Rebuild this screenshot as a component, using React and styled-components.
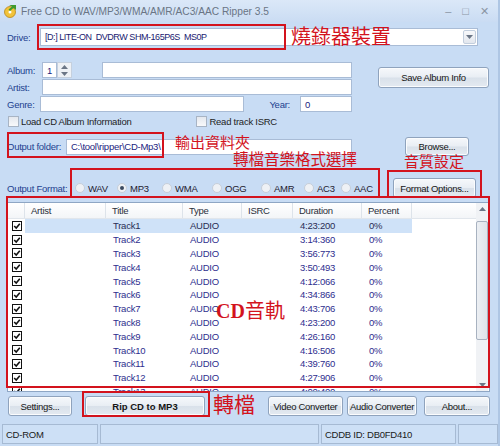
import React from "react";
import styled, { createGlobalStyle, css } from "styled-components";

const Global = createGlobalStyle`
  html, body { margin: 0; padding: 0; width: 500px; height: 446px; overflow: hidden; }
  body { font-family: "Liberation Sans", Arial, sans-serif; }
`;

const Window = styled.div`
  position: relative;
  width: 500px;
  height: 446px;
  box-sizing: border-box;
  display: flex;
  flex-direction: column;
  background: #c8dcf4;
  border-right: 2px solid #aec6e4;
  font-family: "Liberation Sans", Arial, sans-serif;
  font-size: 9.5px;
  letter-spacing: -0.25px;
  color: #1c1c1c;
`;

const TitleBar = styled.div`
  height: 22px;
  display: flex;
  align-items: center;
  padding: 0 9px 0 3px;
  background: linear-gradient(#dbe8f8, #cadcf3);
  color: #6a7585;
  font-size: 10.2px;
  letter-spacing: 0;
`;

const TitleText = styled.span`
  margin-left: 3px;
`;

const Controls = styled.div`
  margin-left: auto;
  display: flex;
  gap: 11px;
  align-items: center;
  color: #8a95a4;
  font-size: 11px;
`;

const Content = styled.div`
  display: flex;
  flex-direction: column;
  padding: 0 8px 0 7px;
`;

const Row = styled.div`
  display: flex;
  align-items: center;
  height: ${(p) => p.h || 16}px;
  margin-top: ${(p) => p.mt || 0}px;
`;

const Label = styled.span`
  width: ${(p) => p.w}px;
  flex: none;
  color: #22418f;
  text-align: ${(p) => (p.right ? "right" : "left")};
  padding-right: ${(p) => p.pr || 0}px;
  box-sizing: border-box;
  white-space: nowrap;
`;

const TextInput = styled.div`
  width: ${(p) => p.w}px;
  height: ${(p) => p.h || 16}px;
  margin-left: ${(p) => p.ml || 0}px;
  box-sizing: border-box;
  background: #fff;
  border: 1px solid #a9bcd6;
  display: flex;
  align-items: center;
  padding-left: 4px;
  color: #1a237e;
  flex: none;
  white-space: nowrap;
  overflow: hidden;
`;

const Combo = styled.div`
  width: 438px;
  height: 18px;
  box-sizing: border-box;
  background: #fff;
  border: 1px solid #a9bcd6;
  display: flex;
  align-items: center;
  padding-left: 4px;
  color: #1a1a70;
  font-size: 9px;
  letter-spacing: -0.45px;
  white-space: pre;
`;

const DropBtn = styled.div`
  margin-left: auto;
  width: 13px;
  height: 14px;
  margin-right: 1px;
  border: 1px solid #c2cedd;
  border-radius: 2px;
  background: linear-gradient(#f8f9fb, #e2e7ee);
  display: flex;
  align-items: center;
  justify-content: center;
  box-sizing: border-box;
`;

const Spin = styled.div`
  width: 15px;
  height: 16px;
  box-sizing: border-box;
  border: 1px solid #c5d0de;
  background: #eef1f5;
  display: flex;
  flex-direction: column;
  align-items: center;
  justify-content: space-around;
  flex: none;
`;

const Fields = styled.div`
  display: flex;
  align-items: flex-start;
  margin-top: 16px;
`;

const FieldCol = styled.div`
  display: flex;
  flex-direction: column;
  width: 345px;
`;

const Button = styled.div`
  width: ${(p) => p.w}px;
  height: ${(p) => p.h || 20}px;
  margin-left: ${(p) => p.ml || 0}px;
  margin-top: ${(p) => p.mt || 0}px;
  flex: none;
  box-sizing: border-box;
  border: 1px solid #8fa3bd;
  border-radius: 3px;
  background: linear-gradient(#f6f8fb 0%, #e9eef4 48%, #d9e1ea 52%, #e4eaf1 100%);
  box-shadow: inset 0 0 0 1px #fbfcfd;
  display: flex;
  align-items: center;
  justify-content: center;
  color: #151515;
  font-size: 9.5px;
  letter-spacing: -0.3px;
  white-space: nowrap;
  ${(p) =>
    p.bold &&
    css`
      font-weight: bold;
      letter-spacing: 0;
    `}
`;

const CheckItem = styled.div`
  display: flex;
  align-items: center;
  margin-left: ${(p) => p.ml || 0}px;
  color: #1e1e1e;
`;

const CheckBox = styled.span`
  width: 9px;
  height: 9px;
  border: 1px solid #a8b4c4;
  background: linear-gradient(#e4e8ee, #f8f9fb);
  margin-right: 2px;
  flex: none;
`;

const RadioGroup = styled.div`
  display: flex;
  align-items: center;
  width: 305px;
`;

const RadioItem = styled.div`
  width: ${(p) => p.w}px;
  flex: none;
  display: flex;
  align-items: center;
  color: #1e2030;
`;

const RadioDot = styled.span`
  width: 8px;
  height: 8px;
  border-radius: 50%;
  border: 1px solid #c6ced9;
  background: #eef1f5;
  margin-right: 3px;
  display: flex;
  align-items: center;
  justify-content: center;
  flex: none;
  &::after {
    content: "";
    width: 4px;
    height: 4px;
    border-radius: 50%;
    background: ${(p) => (p.on ? "#3a4a60" : "transparent")};
  }
`;

const List = styled.div`
  margin-top: 2px;
  width: 483px;
  height: 190px;
  box-sizing: border-box;
  border: 1px solid #8ea6c4;
  background: #fff;
  display: flex;
  overflow: hidden;
`;

const Table = styled.div`
  flex: 1;
  display: flex;
  flex-direction: column;
  overflow: hidden;
`;

const HeaderRow = styled.div`
  display: flex;
  height: 16px;
  flex: none;
  background: linear-gradient(#ffffff, #f3f5f8);
  border-bottom: 1px solid #e1e6ec;
  box-sizing: border-box;
`;

const HeadCell = styled.div`
  width: ${(p) => p.w}px;
  flex: ${(p) => (p.w ? "none" : "1")};
  box-sizing: border-box;
  border-right: ${(p) => (p.w ? "1px solid #dde3ea" : "none")};
  padding-left: 6px;
  display: flex;
  align-items: center;
  color: #2a2f3a;
`;

const DataRow = styled.div`
  display: flex;
  height: 13.8px;
  flex: none;
  align-items: center;
`;

const CheckCell = styled.div`
  width: 17px;
  flex: none;
  display: flex;
  align-items: center;
  justify-content: flex-end;
  padding-right: 3px;
  box-sizing: border-box;
`;

const Cells = styled.div`
  display: flex;
  height: 100%;
  width: 387px;
  background: ${(p) => (p.selected ? "#cfe2f8" : "transparent")};
`;

const Cell = styled.div`
  width: ${(p) => p.w}px;
  flex: none;
  box-sizing: border-box;
  padding-left: 7px;
  display: flex;
  align-items: center;
  color: ${(p) => (p.selected ? "#2a2d55" : "#2e2e8e")};
`;

const ScrollBar = styled.div`
  width: 12px;
  flex: none;
  margin-right: 1px;
  display: flex;
  flex-direction: column;
  align-items: stretch;
  background: #f0f2f5;
`;

const ScrollArrow = styled.div`
  height: 12px;
  display: flex;
  align-items: center;
  justify-content: center;
  margin-top: ${(p) => (p.bottom ? "auto" : "0")};
`;

const Thumb = styled.div`
  height: 117px;
  margin: 6px 0 0;
  border: 1px solid #a8b2c0;
  border-radius: 2px;
  background: linear-gradient(90deg, #eceff3, #dfe4ea);
`;

const ButtonRow = styled.div`
  display: flex;
  align-items: center;
  margin-top: 4px;
  margin-left: 1px;
`;

const StatusBar = styled.div`
  margin-top: auto;
  margin-bottom: 2px;
  height: 20px;
  display: flex;
  gap: 2px;
  padding-left: 2px;
`;

const Panel = styled.div`
  width: ${(p) => p.w}px;
  flex: ${(p) => (p.w ? "none" : "1")};
  box-sizing: border-box;
  border: 1px solid #a6bad3;
  background: #cde0f6;
  display: flex;
  align-items: center;
  padding-left: 3px;
  color: #202020;
`;

const AnnBox = styled.div`
  position: absolute;
  box-sizing: border-box;
  border: 2px solid #d3131d;
  pointer-events: none;
`;

const AnnText = styled.div`
  position: absolute;
  color: #d3131d;
  font-family: "Noto Sans CJK TC", "Noto Sans CJK SC", sans-serif;
  font-size: ${(p) => p.size}px;
  letter-spacing: 0;
  line-height: 1;
  white-space: nowrap;
  pointer-events: none;
`;

const CdWord = styled.span`
  font-family: "Liberation Serif", serif;
  font-weight: bold;
`;

const ListCheck = () => (
  <svg width="10" height="10" viewBox="0 0 10 10">
    <rect x="0.5" y="0.5" width="9" height="9" fill="#fff" stroke="#111" />
    <path d="M2.2 5 L4.2 7 L7.8 2.8" fill="none" stroke="#111" strokeWidth="1.6" />
  </svg>
);

const Tri = ({ up }) => (
  <svg width="7" height="4" viewBox="0 0 7 4">
    <path d={up ? "M0 4 L3.5 0 L7 4 Z" : "M0 0 L3.5 4 L7 0 Z"} fill="#6b7686" />
  </svg>
);

const AppIcon = () => (
  <svg width="15" height="14" viewBox="0 0 15 14">
    <circle cx="7" cy="8" r="5.5" fill="#f2c33a" stroke="#b8861a" strokeWidth="0.8" />
    <circle cx="7" cy="8" r="1.5" fill="#fff" />
    <path d="M6 1 L13 1 L13 6 L10.5 4 L7 7 L5.5 5.5 L9 2.5 Z" fill="#3f9a2e" />
  </svg>
);

const tracks = [
  ["Track1", "4:23:200"],
  ["Track2", "3:14:360"],
  ["Track3", "3:56:773"],
  ["Track4", "3:50:493"],
  ["Track5", "4:12:066"],
  ["Track6", "4:34:866"],
  ["Track7", "4:43:706"],
  ["Track8", "4:23:200"],
  ["Track9", "4:26:160"],
  ["Track10", "4:16:506"],
  ["Track11", "4:39:760"],
  ["Track12", "4:27:906"],
  ["Track13", "4:00:400"],
];

const cols = [81, 77, 59, 51, 69, 50];

const formats = [
  ["WAV", 42],
  ["MP3", 45],
  ["WMA", 50],
  ["OGG", 49],
  ["AMR", 43],
  ["AC3", 37],
  ["AAC", 36],
];

export default function App() {
  return (
    <>
      <Global />
      <Window>
        <TitleBar>
          <AppIcon />
          <TitleText>Free CD to WAV/MP3/WMA/AMR/AC3/AAC Ripper 3.5</TitleText>
          <Controls>
            <span>–</span>
            <span>□</span>
            <span>✕</span>
          </Controls>
        </TitleBar>

        <Content>
          <Row h={18} mt={6}>
            <Label w={33}>Drive:</Label>
            <Combo>
              {"[D:] LITE-ON  DVDRW SHM-165P6S  MS0P"}
              <DropBtn>
                <Tri />
              </DropBtn>
            </Combo>
          </Row>

          <Fields>
            <FieldCol>
              <Row>
                <Label w={35}>Album:</Label>
                <TextInput w={15}>1</TextInput>
                <Spin>
                  <Tri up />
                  <Tri />
                </Spin>
                <TextInput w={250} ml={30} />
              </Row>
              <Row mt={1}>
                <Label w={35}>Artist:</Label>
                <TextInput w={310} />
              </Row>
              <Row mt={1}>
                <Label w={33}>Genre:</Label>
                <TextInput w={204} />
                <Label w={56} right pr={10}>
                  Year:
                </Label>
                <TextInput w={52}>0</TextInput>
              </Row>
            </FieldCol>
            <Button w={111} h={21} ml={26} mt={5}>
              Save Album Info
            </Button>
          </Fields>

          <Row h={12} mt={3}>
            <CheckItem ml={1}>
              <CheckBox />
              Load CD Album Information
            </CheckItem>
            <CheckItem ml={65}>
              <CheckBox />
              Read track ISRC
            </CheckItem>
          </Row>

          <Row h={19} mt={10}>
            <Label w={59}>Output folder:</Label>
            <TextInput w={286}>C:\tool\ripper\CD-Mp3\</TextInput>
            <Button w={64} h={19} ml={53}>
              Browse...
            </Button>
          </Row>

          <Row h={24} mt={20}>
            <Label w={68}>Output Format:</Label>
            <RadioGroup>
              {formats.map(([f, w]) => (
                <RadioItem key={f} w={w}>
                  <RadioDot on={f === "MP3"} />
                  {f}
                </RadioItem>
              ))}
            </RadioGroup>
            <Button w={83} h={20} ml={13}>
              Format Options...
            </Button>
          </Row>

          <List>
            <Table>
              <HeaderRow>
                <HeadCell w={17} />
                <HeadCell w={81}>Artist</HeadCell>
                <HeadCell w={77}>Title</HeadCell>
                <HeadCell w={59}>Type</HeadCell>
                <HeadCell w={51}>ISRC</HeadCell>
                <HeadCell w={69}>Duration</HeadCell>
                <HeadCell w={50}>Percent</HeadCell>
                <HeadCell />
              </HeaderRow>
              {tracks.map(([t, d], i) => (
                <DataRow key={t}>
                  <CheckCell>
                    <ListCheck />
                  </CheckCell>
                  <Cells selected={i === 0}>
                    <Cell w={cols[0]} />
                    <Cell w={cols[1]} selected={i === 0}>{t}</Cell>
                    <Cell w={cols[2]} selected={i === 0}>AUDIO</Cell>
                    <Cell w={cols[3]} />
                    <Cell w={cols[4]} selected={i === 0}>{d}</Cell>
                    <Cell w={cols[5]} selected={i === 0}>0%</Cell>
                  </Cells>
                </DataRow>
              ))}
            </Table>
            <ScrollBar>
              <ScrollArrow>
                <Tri up />
              </ScrollArrow>
              <Thumb />
              <ScrollArrow bottom>
                <Tri />
              </ScrollArrow>
            </ScrollBar>
          </List>

          <ButtonRow>
            <Button w={64}>Settings...</Button>
            <Button w={120} ml={13} bold>
              Rip CD to MP3
            </Button>
            <Button w={75} ml={63}>
              Video Converter
            </Button>
            <Button w={70} ml={4}>
              Audio Converter
            </Button>
            <Button w={66} ml={7}>
              About...
            </Button>
          </ButtonRow>
        </Content>

        <StatusBar>
          <Panel w={96}>CD-ROM</Panel>
          <Panel w={219} />
          <Panel w={135}>CDDB ID: DB0FD410</Panel>
          <Panel />
        </StatusBar>

        <AnnBox style={{ left: 37, top: 24, width: 249, height: 26 }} />
        <AnnText size={20} style={{ left: 291, top: 26 }}>燒錄器裝置</AnnText>
        <AnnBox style={{ left: 7, top: 132, width: 157, height: 26 }} />
        <AnnText size={15} style={{ left: 175, top: 134 }}>輸出資料夾</AnnText>
        <AnnText size={15.5} style={{ left: 233, top: 151 }}>轉檔音樂格式選擇</AnnText>
        <AnnText size={15} style={{ left: 404, top: 153 }}>音質設定</AnnText>
        <AnnBox style={{ left: 70, top: 168, width: 310, height: 30 }} />
        <AnnBox style={{ left: 387, top: 170, width: 95, height: 28 }} />
        <AnnBox style={{ left: 6, top: 196, width: 484, height: 192 }} />
        <AnnText size={20} style={{ left: 216, top: 300 }}>
          <CdWord>CD</CdWord>音軌
        </AnnText>
        <AnnBox style={{ left: 82, top: 391, width: 128, height: 26 }} />
        <AnnText size={21} style={{ left: 213, top: 393 }}>轉檔</AnnText>
      </Window>
    </>
  );
}
